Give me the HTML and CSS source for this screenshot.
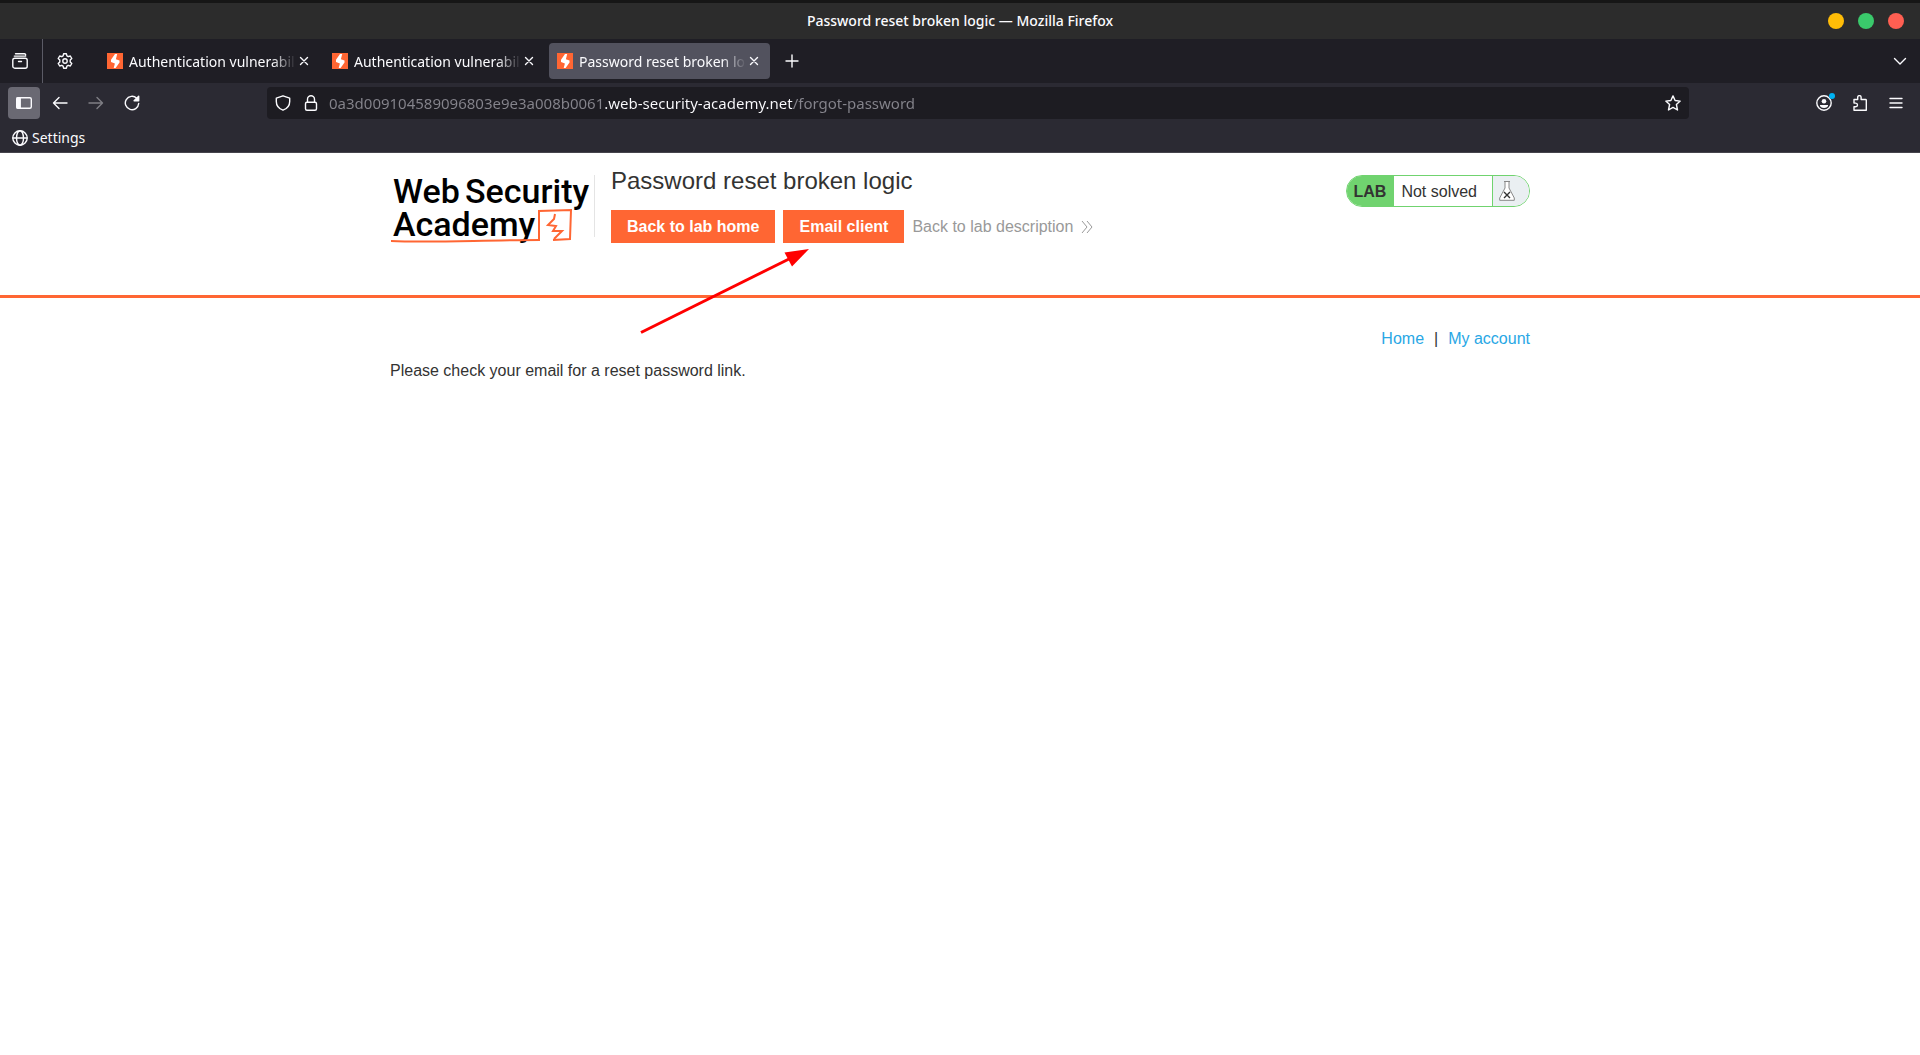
FILE: index.html
```html
<!DOCTYPE html>
<html lang="en">
<head>
<meta charset="utf-8">
<title>Password reset broken logic — Mozilla Firefox</title>
<link rel="stylesheet" href="styles.css">
</head>
<body>
<svg class="sprite" aria-hidden="true">
  <symbol id="favicon" viewBox="0 0 16 16">
    <path fill="#ff6633" d="M0 0h16v16H0z"/>
    <path fill="#fff" d="M8 1h2.200L8.900 6.200l3.600 1.300v2L8.600 15H6.700l1.200-4.600-3.900-1.300V6.800z"/>
  </symbol>
  <symbol id="close" viewBox="0 0 16 16">
    <path d="M4.500 4.500l7 7M11.500 4.500l-7 7"/>
  </symbol>
</svg>

<div class="browser">
  <header class="titlebar">
    <span class="window-title">Password reset broken logic — Mozilla Firefox</span>
    <div class="window-controls">
      <button class="dot dot-min" aria-label="Minimise"></button>
      <button class="dot dot-max" aria-label="Maximise"></button>
      <button class="dot dot-close" aria-label="Close window"></button>
    </div>
  </header>

  <div class="tabstrip">
    <button class="icon-btn view-btn" aria-label="Recent browsing">
      <svg class="icon" viewBox="0 0 16 16"><path d="M3.500.8h9a1.200 1.200 0 0 1 1.200 1M2.300 3.100h11.400"/><rect x=".8" y="5.200" width="14.400" height="10" rx="2"/><path d="M6.500 8.500h3"/></svg>
    </button>
    <button class="icon-btn pinned" aria-label="Settings tab">
      <svg class="icon" viewBox="0 0 16 16"><circle cx="8" cy="8" r="2.200"/><path d="M6.600.8h2.800l.5 2.100 1.300.8 2.100-.7 1.500 2.500-1.600 1.600v1.800l1.600 1.600-1.500 2.500-2.100-.7-1.300.8-.5 2.100H6.600l-.5-2.100-1.300-.8-2.100.7-1.500-2.500 1.600-1.600V7.100L1.200 5.500 2.700 3l2.100.7 1.300-.8z"/></svg>
    </button>
    <div class="tabs">
      <div class="tab">
        <svg class="favicon"><use href="#favicon"/></svg>
        <span class="tab-label">Authentication vulnerabilities</span>
        <button class="tab-close" aria-label="Close tab"><svg class="icon"><use href="#close"/></svg></button>
      </div>
      <div class="tab">
        <svg class="favicon"><use href="#favicon"/></svg>
        <span class="tab-label">Authentication vulnerabilities</span>
        <button class="tab-close" aria-label="Close tab"><svg class="icon"><use href="#close"/></svg></button>
      </div>
      <div class="tab tab-active">
        <svg class="favicon"><use href="#favicon"/></svg>
        <span class="tab-label">Password reset broken logic</span>
        <button class="tab-close" aria-label="Close tab"><svg class="icon"><use href="#close"/></svg></button>
      </div>
    </div>
    <button class="icon-btn" aria-label="New tab">
      <svg class="icon" viewBox="0 0 16 16"><path d="M8 2v12M2 8h12"/></svg>
    </button>
    <button class="icon-btn all-tabs" aria-label="List all tabs">
      <svg class="icon" viewBox="0 0 16 16"><path d="M2.500 5.500L8 11l5.500-5.500"/></svg>
    </button>
  </div>

  <div class="toolbar">
    <button class="icon-btn icon-btn-on" aria-label="Show sidebar">
      <svg class="icon" viewBox="0 0 16 16"><rect x=".7" y="2.700" width="14.600" height="10.600" rx="1.500"/><path fill="currentColor" d="M1 3h3.200v10H1z"/></svg>
    </button>
    <button class="icon-btn" aria-label="Back">
      <svg class="icon" viewBox="0 0 16 16"><path d="M15 8H1.500M7 2.500L1.500 8 7 13.500"/></svg>
    </button>
    <button class="icon-btn" aria-label="Forward" disabled>
      <svg class="icon" viewBox="0 0 16 16"><path d="M1 8h13.500M9 2.500L14.500 8 9 13.500"/></svg>
    </button>
    <button class="icon-btn" aria-label="Reload">
      <svg class="icon" viewBox="0 0 16 16"><path d="M12.700 3.200A6.700 6.700 0 1 0 14.700 8.500"/><path fill="currentColor" d="M14.700 1.200v4.600h-4.600z"/></svg>
    </button>
    <span class="spacer"></span>
    <div class="urlbar">
      <button class="url-btn" aria-label="Tracking protection">
        <svg class="icon" viewBox="0 0 16 16"><path d="M8 .8l6.700 2.400v3.300c0 3.900-2.700 7.200-6.700 8.700C4 13.700 1.300 10.400 1.300 6.500V3.200z"/></svg>
      </button>
      <button class="url-btn" aria-label="Connection secure">
        <svg class="icon" viewBox="0 0 16 16"><rect x="2.500" y="7.200" width="11" height="8" rx="1.500"/><path d="M4.500 7V4.200a3.500 3.500 0 0 1 7 0V7"/></svg>
      </button>
      <input class="url-input" type="text" aria-label="Address" value="0a3d009104589096803e9e3a008b0061.web-security-academy.net/forgot-password">
      <button class="icon-btn" aria-label="Bookmark this page">
        <svg class="icon" viewBox="0 0 16 16"><path d="M8 .9l2.100 4.600 5.100.6-3.800 3.400 1.100 5.500L8 12.400 3.500 15l1.100-5.500L.8 6.100l5.100-.6z"/></svg>
      </button>
    </div>
    <span class="spacer"></span>
    <button class="icon-btn account" aria-label="Account">
      <svg class="icon" viewBox="0 0 16 16"><circle cx="8" cy="8" r="7.200"/><circle cx="8" cy="6.200" r="2.300" fill="currentColor" stroke="none"/><path fill="currentColor" stroke="none" d="M4 10h8v.5c0 1.500-1.700 2.500-4 2.500s-4-1-4-2.500z"/></svg>
    </button>
    <button class="icon-btn" aria-label="Extensions">
      <svg class="icon" viewBox="0 0 16 16"><path d="M2 4.500h3.700V2.300a1.700 1.700 0 0 1 3.400 0v2.200h4.500a.7.700 0 0 1 .7.700v10H2v-3.500h1.700a1.800 1.800 0 0 0 0-3.600H2z"/></svg>
    </button>
    <button class="icon-btn" aria-label="Menu">
      <svg class="icon" viewBox="0 0 16 16"><path d="M2 3.500h12M2 8h12M2 12.500h12"/></svg>
    </button>
  </div>

  <nav class="bookmarks">
    <a href="#" class="bookmark">
      <svg class="icon" viewBox="0 0 16 16"><circle cx="8" cy="8" r="7.200"/><ellipse cx="8" cy="8" rx="3.500" ry="7.200"/><path d="M1 8h14"/></svg>
      Settings
    </a>
  </nav>
</div>

<div class="lab-header">
  <div class="container lab-row">
    <a href="#" class="logo" aria-label="Web Security Academy">
      <svg class="logo-mark" viewBox="0 0 200 80">
        <text class="logo-text" x="3" y="38">Web</text>
        <text class="logo-text" x="75" y="38">Security</text>
        <text class="logo-text" x="3" y="71">Academy</text>
        <g fill="none" stroke="#ff6633" stroke-width="2">
          <path d="M149 75V46l32-1-1 29-17 1"/>
          <path d="M1 76c40 2 90-1 149-1"/>
          <path d="M165 49l-1 5-6 6 8 1-3 5 9 0-8 8"/>
        </g>
      </svg>
    </a>
    <div class="lab-title">
      <h2>Password reset broken logic</h2>
      <div class="lab-actions">
        <a href="#" class="button">Back to lab home</a>
        <a href="#" class="button">Email client</a>
        <a href="#" class="back-link">Back to lab description
          <svg class="chevrons" viewBox="0 0 12 12"><path d="M1 0l5 6-5 6M6 0l5 6-5 6"/></svg>
        </a>
      </div>
    </div>
    <div class="lab-status">
      <span class="lab-tag">LAB</span>
      <span class="lab-state">Not solved</span>
      <span class="lab-flask">
        <svg viewBox="0 0 16 20"><path fill="#fff" d="M5 .5h6M6 1v6L.7 17v2.300h14.600V17L10 7V1"/><path class="cross" d="M5 11l6 6M11 11l-6 6"/></svg>
      </span>
    </div>
    <svg class="arrow" viewBox="0 0 180 100" aria-hidden="true">
      <path class="arrow-line" d="M11 87.500L161 13"/>
      <path class="arrow-head" d="M179 4l-24.500 3.500L162 21.500z"/>
    </svg>
  </div>
</div>

<main class="container content">
  <nav class="account-links">
    <a href="#">Home</a><span>|</span><a href="#">My account</a>
  </nav>
  <p>Please check your email for a reset password link.</p>
</main>
</body>
</html>
```

FILE: styles.css
```css
* {
  box-sizing: border-box;
}

body {
  margin: 0;
  background: #fff;
  color: #333332;
  font: 16px/24px "Liberation Sans", Arial, sans-serif;
}

a {
  color: #29a7e5;
  text-decoration: none;
}

button {
  border: 0;
  padding: 0;
  background: none;
  color: inherit;
  font: inherit;
}

.sprite {
  position: absolute;
  width: 0;
  height: 0;
}

/* Browser window */

.browser {
  background: #2b2a33;
  color: #fbfbfe;
  border-bottom: 1px solid #45444c;
  font: 14px/20px "Noto Sans", sans-serif;
}

.titlebar {
  display: grid;
  grid-template-columns: 1fr auto 1fr;
  align-items: center;
  height: 39px;
  padding: 0 16px;
  border-top: 3px solid #161616;
  background: #2c2c2c;
}

.window-title {
  grid-column: 2;
  font-weight: 500;
}

.window-controls {
  display: flex;
  justify-content: flex-end;
  gap: 14px;
}

.dot {
  width: 16px;
  height: 16px;
  border-radius: 50%;
}

.dot-min { background: #ffbd07; }
.dot-max { background: #3ac96b; }
.dot-close { background: #ff5f52; }

.icon {
  display: block;
  width: 16px;
  height: 16px;
  fill: none;
  stroke: currentColor;
  stroke-width: 1.4;
  stroke-linecap: round;
  stroke-linejoin: round;
}

.icon-btn {
  display: flex;
  flex: none;
  align-items: center;
  justify-content: center;
  width: 32px;
  height: 32px;
  border-radius: 4px;
}

.icon-btn:disabled {
  opacity: 0.4;
}

.icon-btn-on {
  background: #6a6973;
}

.tabstrip {
  display: flex;
  align-items: center;
  height: 44px;
  padding-right: 4px;
  background: #1f1e25;
}

.view-btn {
  width: 43px;
  height: 44px;
  padding-right: 2px;
  border-right: 1px solid #5b5b66;
  border-radius: 0;
}

.pinned {
  width: 44px;
}

.tabs {
  display: flex;
  gap: 4px;
  margin: 0 6px 0 12px;
}

.tab {
  display: flex;
  align-items: center;
  width: 221px;
  height: 36px;
  padding: 0 8px;
  border-radius: 4px;
}

.tab-active {
  background: #52525e;
}

.favicon {
  flex: none;
  width: 16px;
  height: 16px;
  margin-right: 6px;
}

.tab-label {
  flex: 1;
  overflow: hidden;
  padding-top: 2px;
  white-space: nowrap;
  mask-image: linear-gradient(to left, transparent, #000 24px);
}

.tab-close {
  width: 16px;
}

.all-tabs {
  margin-left: auto;
}

.toolbar {
  display: flex;
  align-items: center;
  gap: 4px;
  height: 40px;
  padding: 0 8px;
}

.spacer {
  flex: 111;
}

.urlbar {
  display: flex;
  flex: 1422;
  align-items: center;
  height: 32px;
  border-radius: 4px;
  background: #1d1c22;
}

.url-btn {
  display: flex;
  justify-content: center;
  width: 28px;
}

.url-btn:first-child {
  margin-left: 2px;
}

/* The gradient lights up the domain between the dimmed subdomain and path */
.url-input {
  flex: 1;
  min-width: 0;
  height: 32px;
  margin-left: 4px;
  padding: 0;
  border: 0;
  outline: 0;
  background: linear-gradient(to right, #85848c 276px, #fbfbfe 276px 464px, #85848c 464px);
  background-clip: text;
  color: transparent;
  font: inherit;
  font-size: 15px;
}

.account {
  position: relative;
}

.account::after {
  content: "";
  position: absolute;
  top: 6px;
  right: 5px;
  width: 6px;
  height: 6px;
  border-radius: 50%;
  background: #00b3f4;
}

.bookmarks {
  display: flex;
  align-items: center;
  height: 29px;
  padding: 0 12px;
}

.bookmark {
  display: flex;
  align-items: center;
  gap: 4px;
  color: inherit;
}

/* Lab page */

.container {
  position: relative;
  max-width: 1140px;
  margin: 0 auto;
}

.lab-header {
  border-bottom: 3px solid #ff6633;
}

.lab-row {
  display: flex;
  align-items: flex-start;
  min-height: 142px;
}

.logo {
  width: 205px;
  height: 62px;
  margin-top: 22px;
  border-right: 1px solid #e4e4e4;
}

.logo-mark {
  display: block;
  width: 200px;
  height: 80px;
  margin-top: -10px;
}

.logo-text {
  fill: #000;
  font: 500 34px Roboto, sans-serif;
}

.lab-title {
  margin-left: 16px;
}

.lab-title h2 {
  margin: 14px 0 15px;
  font-size: 24px;
  font-weight: 400;
  line-height: 28px;
}

.lab-actions {
  display: flex;
  align-items: center;
  gap: 8px;
}

.button {
  padding: 0 16px;
  background: #ff6633;
  color: #fff;
  font-weight: 700;
  line-height: 33px;
}

.back-link {
  display: flex;
  align-items: center;
  gap: 8px;
  color: #999;
}

.chevrons {
  width: 12px;
  height: 12px;
  fill: none;
  stroke: currentColor;
}

.lab-status {
  display: flex;
  height: 32px;
  margin: 22px 0 0 auto;
  overflow: hidden;
  border: 1px solid #70d36f;
  border-radius: 16px;
  line-height: 32px;
}

.lab-tag {
  padding: 0 8px 0 7px;
  background: #70d36f;
  font-weight: 700;
}

.lab-state {
  padding: 0 15px 0 7px;
}

.lab-flask {
  display: flex;
  align-items: center;
  padding: 0 14px 0 6px;
  border-left: 1px solid #70d36f;
  background: #eaeff2;
}

.lab-flask svg {
  width: 16px;
  height: 20px;
  fill: none;
  stroke: #888;
}

.lab-flask .cross {
  stroke: #333;
  stroke-width: 1.4;
}

.arrow {
  position: absolute;
  top: 92px;
  left: 240px;
  width: 180px;
  height: 100px;
}

.arrow-line {
  fill: none;
  stroke: #f00;
  stroke-width: 3;
}

.arrow-head {
  fill: #f00;
}

.content {
  padding-top: 29px;
}

.account-links {
  display: flex;
  justify-content: flex-end;
  gap: 10px;
}

.content p {
  margin: 8px 0;
}
```
